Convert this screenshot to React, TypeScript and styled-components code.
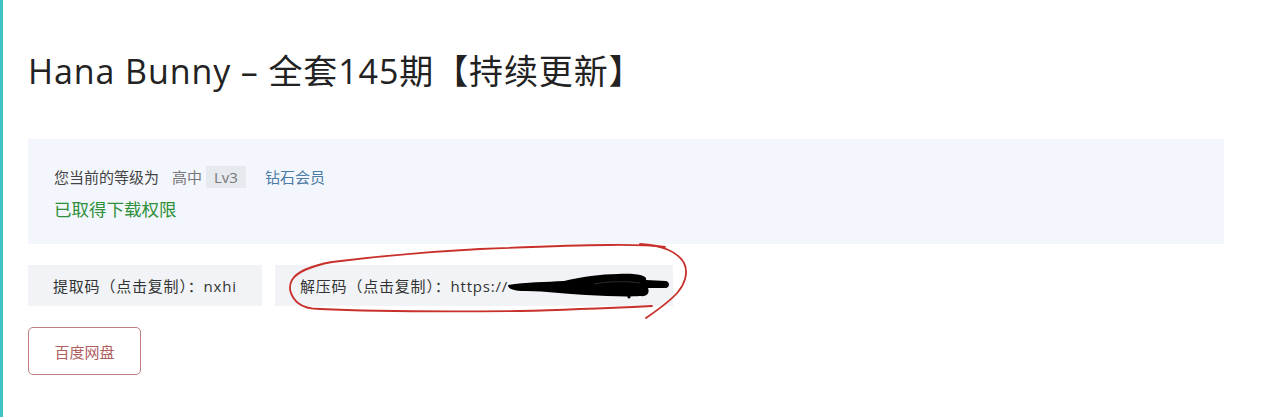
import React from 'react';
import styled, { createGlobalStyle } from 'styled-components';

const GlobalStyle = createGlobalStyle`
  html, body {
    margin: 0;
    padding: 0;
    background: #fff;
  }
  body {
    font-family: "Open Sans", "Noto Sans CJK SC", sans-serif;
    color: #333;
  }
`;

const Page = styled.div`
  min-height: 417px;
  box-sizing: border-box;
  border-left: 3px solid #3ec4c2;
  padding: 46px 56px 0 25px;
`;

const Title = styled.h1`
  margin: 0;
  font-size: 34px;
  font-weight: 400;
  line-height: 50px;
  color: #222;
  letter-spacing: 0.9px;
`;

const InfoBox = styled.div`
  margin-top: 43px;
  background: #f3f7fd;
  padding: 26px 26px 22px;
  display: flex;
  flex-direction: column;
  gap: 7px;
`;

const LevelLine = styled.div`
  display: flex;
  align-items: center;
  font-size: 15px;
  line-height: 24px;
  color: #444;
`;

const Grade = styled.span`
  margin-left: 13px;
  color: #777;
`;

const LevelBadge = styled.span`
  margin-left: 4px;
  padding: 0 8px;
  background: #e6e9ee;
  color: #777;
  line-height: 22px;
`;

const Vip = styled.span`
  margin-left: 19px;
  color: #4b7ca6;
`;

const Granted = styled.div`
  font-size: 17.5px;
  line-height: 26px;
  color: #2f8f3a;
`;

const CodeRow = styled.div`
  margin-top: 21px;
  display: flex;
  gap: 13px;
`;

const CodeBox = styled.div<{ $width: number }>`
  position: relative;
  width: ${p => p.$width}px;
  box-sizing: border-box;
  height: 41px;
  display: flex;
  align-items: center;
  padding-left: 25px;
  background: #f1f3f6;
  font-size: 15px;
  letter-spacing: 0.8px;
  color: #333;
  white-space: nowrap;
  cursor: pointer;
`;

const Redacted = styled.span`
  display: inline-block;
  width: 150px;
`;

const Overlay = styled.svg`
  position: absolute;
  pointer-events: none;
  overflow: visible;
`;

const PanButton = styled.button`
  margin-top: 21px;
  width: 113px;
  height: 48px;
  border: 1px solid #bd7f7f;
  border-radius: 5px;
  background: #fff;
  color: #b0605f;
  font-family: "Noto Sans CJK SC", sans-serif;
  font-size: 15px;
  cursor: pointer;
`;

function Scribble() {
  return (
    <Overlay style={{ left: 231, top: 8 }} width="165" height="26" viewBox="0 0 165 26">
      <path
        d="M2 12 C20 9 40 9 58 8 C75 4 95 1 112 1 C132 0 142 3 140 7 L160 8 C164 9 164 14 160 15 L142 15 C144 20 141 24 134 23 C120 24 100 23 80 22 C60 21 40 18 20 18 C8 18 2 16 2 12 Z"
        fill="#000"
      />
      <path d="M88 11 C104 8 120 8 134 10" stroke="#2a2a2a" strokeWidth="1" fill="none" />
      <path d="M122 16 L123 24" stroke="#000" strokeWidth="3" strokeLinecap="round" fill="none" />
    </Overlay>
  );
}

function RedCircle() {
  return (
    <Overlay style={{ left: -13, top: -22 }} width="430" height="80" viewBox="0 0 430 80">
      <path
        d="M403 4 C380 1 338 1 218 6 C160 9 118 13 70 19 C48 23 34 30 30 37 C26 44 28 53 36 60 C42 65 50 66 58 66 C100 68 158 69 258 68 C300 67 348 65 390 63"
        stroke="#c8302c"
        strokeWidth="1.8"
        fill="none"
        strokeLinecap="round"
      />
      <path
        d="M378 1 C400 2 416 9 422 20 C427 30 422 42 416 49 C410 56 400 64 384 75"
        stroke="#c8302c"
        strokeWidth="1.8"
        fill="none"
        strokeLinecap="round"
      />
    </Overlay>
  );
}

export default function App() {
  return (
    <>
      <GlobalStyle />
      <Page>
        <Title>Hana Bunny – 全套145期【持续更新】</Title>
        <InfoBox>
          <LevelLine>
            您当前的等级为
            <Grade>高中</Grade>
            <LevelBadge>Lv3</LevelBadge>
            <Vip>钻石会员</Vip>
          </LevelLine>
          <Granted>已取得下载权限</Granted>
        </InfoBox>
        <CodeRow>
          <CodeBox $width={234}>提取码（点击复制）：nxhi</CodeBox>
          <CodeBox $width={398}>
            解压码（点击复制）：https://
            <Redacted />
            <Scribble />
            <RedCircle />
          </CodeBox>
        </CodeRow>
        <PanButton>百度网盘</PanButton>
      </Page>
    </>
  );
}
